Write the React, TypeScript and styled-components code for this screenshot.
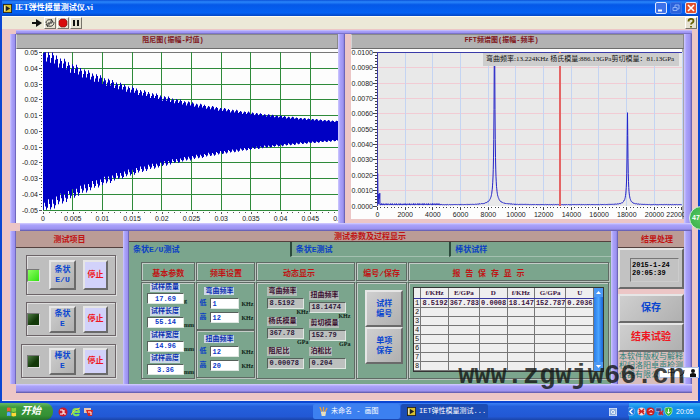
import React from "react";
import styled, { createGlobalStyle, css } from "styled-components";

const Global = createGlobalStyle`
  * { box-sizing: border-box; }
  body { margin: 0; background: #ecc6c6; }
  body, button, input, table {
    font-family: "Liberation Mono", "Noto Sans CJK SC", monospace;
    font-size: 7px;
    line-height: 9px;
  }
  button, input { margin: 0; padding: 0; border-radius: 0; }
  h1, h2, h3, p { margin: 0; font-weight: normal; }
`;

const sunken = css`
  border: 1px solid;
  border-color: #55605a #dfe8e2 #dfe8e2 #55605a;
`;
const raised = css`
  border: 2px solid;
  border-color: #e6e6e6 #6a6a6a #6a6a6a #e6e6e6;
`;
const groove = css`
  border: 1px solid #5f6a64;
  box-shadow: inset 1px 1px 0 #c4cdc8, 1px 1px 0 #b9c4be;
`;

const Desktop = styled.div`
  position: relative;
  display: flex;
  flex-direction: column;
  min-height: 100vh;
  overflow: hidden;
`;
const Window = styled.main`
  flex: 1;
  display: flex;
  flex-direction: column;
  border: solid #0a46d2;
  border-width: 0 2px 2px;
`;
const TitleBar = styled.header`
  display: flex;
  align-items: center;
  gap: 3px;
  height: 16px;
  padding: 0 1px;
  color: #fff;
  background: linear-gradient(#0a50d8, #2a86fa 12%, #0558e8 30%, #0462f4 80%, #0346c4);
  h1 {
    flex: 1;
    font-family: "Liberation Serif", "Noto Sans CJK SC", serif;
    font-size: 8px;
    font-weight: bold;
    line-height: 12px;
  }
`;
const CaptionButton = styled.button<{ $close?: boolean; $dim?: boolean }>`
  display: flex;
  width: 12px;
  height: 12px;
  border: 1px solid ${(p) => (p.$dim ? "#3a74e8" : "#dfe8ff")};
  border-radius: 2px;
  background: ${(p) => (p.$close ? "#e2502c" : p.$dim ? "#2a62dc" : "#3c72ea")};
  svg { width: 100%; height: 100%; }
`;
const Toolbar = styled.div`
  display: flex;
  align-items: center;
  height: 13px;
  padding: 0 1px 0 29px;
  background: #ece9d8;
  border-top: 1px solid #fffef2;
`;
const ToolButton = styled.button<{ $flat?: boolean; $end?: boolean }>`
  display: flex;
  width: 12px;
  height: 12px;
  margin: 0 ${(p) => (p.$end ? 0 : 1)}px 0 ${(p) => (p.$end ? "auto" : 0)};
  border: 1px solid;
  border-color: ${(p) => (p.$flat ? "transparent" : "#fff #77746a #77746a #fff")};
  background: ${(p) => (p.$flat ? "transparent" : "#e6e2d2")};
  svg { width: 100%; height: 100%; }
`;
const Workspace = styled.div`
  flex: 1;
  padding: 1px 6px 7px 8px;
  background: #ecc6c6;
  border-bottom: 1px solid #fbeeee;
`;
const Bar = styled.div<{ $h: number; $inset?: number }>`
  height: ${(p) => p.$h}px;
  margin-left: ${(p) => p.$inset ?? 0}px;
  background: linear-gradient(#d6d0ff, #aaa2fa 25%, #9c92f0 75%, #5a54a4);
`;
const Rail = styled.div<{ $w: number }>`
  flex: none;
  width: ${(p) => p.$w}px;
  background: linear-gradient(90deg, #d0caff, #aaa2fa 30%, #9c92f0 75%, #5a54a4);
`;
const Row = styled.div`
  display: flex;
`;
const ChartPanel = styled.section<{ $grow: number; $gap?: number }>`
  position: relative;
  display: flex;
  flex-direction: column;
  flex: ${(p) => p.$grow} 1 0;
  min-width: 0;
  margin-left: ${(p) => p.$gap ?? 0}px;
  svg { display: block; width: 100%; background: #fdfdfd; }
`;
const ChartTitle = styled.h2<{ $trail: number }>`
  height: 15px;
  padding: 1px ${(p) => p.$trail}px 0 0;
  text-align: center;
  color: #80161c;
  font-size: 7px;
  font-weight: bold;
  background: #b2b2b2;
  border: 1px solid;
  border-color: #8a8a8a #8a8a8a #6c6c6c #d4d4d4;
`;
const Readout = styled.p`
  position: absolute;
  top: 19px;
  right: 5px;
  width: 196px;
  padding: 2px 3px;
  font-family: "Liberation Serif", "Noto Sans CJK SC", serif;
  font-size: 7px;
  color: #111;
  white-space: nowrap;
  background: #cdcdcd;
`;

const Panel = styled.section<{ $w?: number; $bg?: string }>`
  display: flex;
  flex-direction: column;
  flex: ${(p) => (p.$w ? `0 0 ${p.$w}px` : "1 1 0")};
  min-width: 0;
  background: ${(p) => p.$bg ?? "#bebebe"};
`;
const PanelTitle = styled.h2<{ $h: number; $lead?: number }>`
  height: ${(p) => p.$h}px;
  padding-left: ${(p) => p.$lead ?? 0}px;
  line-height: ${(p) => p.$h + 1}px;
  text-align: center;
  color: #c01414;
  font-size: 8px;
  font-weight: bold;
  background: #bb9c96;
  border-bottom: 1px solid #54403e;
  overflow: hidden;
`;
const TestGroup = styled.div<{ $left: number; $h: number; $top: number }>`
  display: flex;
  align-items: center;
  height: ${(p) => p.$h}px;
  margin: ${(p) => p.$top}px 7px 0 ${(p) => p.$left}px;
  border: 1px solid #6c6468;
  box-shadow: inset 1px 1px 0 #dedede, 1px 1px 0 #dedede;
`;
const Led = styled.span<{ $on?: boolean; $left: number }>`
  flex: none;
  width: 13px;
  height: 13px;
  margin: 0 9px 0 ${(p) => p.$left}px;
  border: 1px solid;
  border-color: #777 #ddd #ddd #777;
  background: ${(p) =>
    p.$on ? "linear-gradient(135deg, #8cff60, #32e010)" : "linear-gradient(135deg, #4d7a44, #123808 60%)"};
`;
const PushButton = styled.button<{ $w?: number; $h: number; $large?: boolean; $tone?: "stop" | "end" }>`
  ${raised}
  display: block;
  width: ${(p) => (p.$w ? `${p.$w}px` : "100%")};
  height: ${(p) => p.$h}px;
  margin-right: ${(p) => (p.$w && !p.$tone ? 7 : 0)}px;
  color: ${(p) => (p.$tone ? "#f01420" : "#0a46d0")};
  background: ${(p) => (p.$tone === "stop" ? "#d2d2fa" : "linear-gradient(135deg, #cfcfcf, #b0b0b0)")};
  font-size: ${(p) => (p.$large ? 10 : 8)}px;
  font-weight: bold;
  line-height: 10px;
  white-space: pre;
`;

const Tabs = styled.div`
  display: grid;
  grid-template-columns: 161fr 160fr 162fr;
  height: 15px;
`;
const Tab = styled.button<{ $active?: boolean }>`
  border: 0 solid #2c4a3c;
  border-width: ${(p) => (p.$active ? "0" : "0 0 0 2px")};
  border-bottom: 1px solid ${(p) => (p.$active ? "transparent" : "#a4c0b0")};
  padding-left: 4px;
  text-align: left;
  color: #0a40c4;
  background: #7ba58d;
  font-size: 8px;
  font-weight: bold;
  white-space: nowrap;
`;
const Columns = styled.div`
  display: grid;
  grid-template-columns: 55fr 59fr 100fr 51fr 203fr;
  grid-template-rows: 19px auto;
  gap: 1px;
  margin: 5px 2px 0 12px;
`;
const ColumnTitle = styled.h3<{ $trail?: number }>`
  ${groove}
  padding: 5px ${(p) => p.$trail ?? 0}px 0 0;
  text-align: center;
  color: #c01414;
  font-size: 8px;
  font-weight: bold;
  line-height: 11px;
  white-space: pre;
`;
const Cell = styled.div<{ $pad?: string }>`
  ${groove}
  display: flex;
  flex-direction: column;
  height: 97px;
  padding: ${(p) => p.$pad ?? "0"};
`;
const Chip = styled.label<{ $dark?: boolean }>`
  align-self: flex-start;
  justify-self: start;
  padding: 0 1px;
  color: ${(p) => (p.$dark ? "#3a1030" : "#0a30b0")};
  background: ${(p) => (p.$dark ? "#b4bcb8" : "#ccd8e6")};
  font-size: 7px;
  font-weight: bold;
  line-height: 9px;
  white-space: nowrap;
`;
const Param = styled.div`
  display: grid;
  grid-template-columns: 37px 1fr;
  align-content: start;
  align-items: end;
  row-gap: 1px;
  height: 24px;
  ${Chip} { grid-column: 1 / 3; margin-left: 3px; }
`;
const Field = styled.input<{ $center?: boolean }>`
  ${sunken}
  width: 100%;
  min-width: 0;
  height: 11px;
  padding: 0 1px;
  color: #0a38c8;
  background: #fff;
  font-weight: bold;
  text-align: ${(p) => (p.$center ? "center" : "left")};
`;
const Unit = styled.span`
  font-family: "Liberation Serif", serif;
  font-size: 6px;
  font-weight: bold;
  line-height: 6px;
  color: #0c1c14;
`;
const FreqGroup = styled.fieldset`
  ${groove}
  display: flex;
  flex-direction: column;
  gap: 3px;
  height: 48px;
  margin: 0;
  padding: 4px 1px 0 2px;
  min-width: 0;
  > ${Chip} { margin-left: 5px; line-height: 8px; }
`;
const FreqRow = styled.div`
  display: grid;
  grid-template-columns: 9px 29px 1fr;
  column-gap: 2px;
  align-items: center;
  height: 11px;
  label { color: #0a40c4; font-weight: bold; }
`;
const Dynamic = styled.div`
  display: grid;
  grid-template-columns: 37px 37px;
  column-gap: 5px;
  padding: 4px 0 0 10px;
`;
const Stack = styled.div<{ $top?: number }>`
  display: flex;
  flex-direction: column;
  padding-top: ${(p) => p.$top ?? 0}px;
`;
const Reading = styled.div<{ $h: number }>`
  display: flex;
  flex-direction: column;
  height: ${(p) => p.$h}px;
  ${Unit} { align-self: flex-end; margin-right: -4px; }
`;
const Value = styled.output`
  ${sunken}
  height: 11px;
  margin-top: 2px;
  padding: 0 1px;
  color: #2c1838;
  background: #bcc0be;
  font-weight: bold;
`;

const TableFrame = styled.div`
  display: flex;
  border: 1px solid #333;
`;
const Report = styled.table`
  flex: 1;
  min-width: 0;
  table-layout: fixed;
  border-collapse: collapse;
  background: #efefef;
  color: #3c1440;
  th, td {
    height: 9px;
    padding: 0;
    border: 1px solid #777;
    border-width: 0 1px 1px 0;
    overflow: hidden;
    font-weight: bold;
    line-height: 8px;
    white-space: nowrap;
    text-align: left;
  }
  td { padding-left: 1px; }
  thead th {
    height: 10px;
    text-align: center;
    font-family: "Liberation Serif", serif;
    border-bottom-color: #3838a0;
  }
  tbody th { text-align: center; font-weight: normal; color: #111; }
`;
const Scroll = styled.div`
  display: flex;
  flex-direction: column;
  justify-content: space-between;
  width: 9px;
  background: linear-gradient(90deg, #2a7ce8, #4aa4ff 50%, #1a66d8);
  button { height: 9px; border: 0; background: #4a98f4; }
  svg { display: block; width: 100%; height: 9px; }
`;
const ClockBox = styled.div`
  ${raised}
  height: 41px;
  padding: 8px 3px 4px 10px;
  background: #c2c2c2;
  time {
    display: block;
    height: 24px;
    padding: 2px 1px;
    border: 1px solid;
    border-color: #777 #ccc #ccc #777;
    font-weight: bold;
    line-height: 8px;
  }
`;
const Actions = styled.div`
  padding-top: 5px;
  background: #ecc6c6;
`;
const License = styled.p`
  padding: 0 1px;
  color: #2a8078;
  font-size: 8px;
  line-height: 9px;
  white-space: nowrap;
  background: #d8bebc;
  height: 32px;
`;

const Watermark = styled.div`
  position: absolute;
  right: 15px;
  bottom: 29px;
  color: rgba(16, 20, 18, 0.8);
  font-size: 27px;
  font-weight: bold;
  line-height: 30px;
`;
const Badge = styled.div`
  position: absolute;
  right: -13px;
  top: 206px;
  width: 24px;
  height: 24px;
  padding-left: 2px;
  border: 1px solid #d8f0dc;
  border-radius: 50%;
  background: radial-gradient(#56c864, #36ac48);
  color: #fff;
  font: bold 7px/22px "Liberation Sans", sans-serif;
`;
const ImeBar = styled.div`
  position: absolute;
  right: 1px;
  bottom: 42px;
  display: flex;
  align-items: center;
  justify-content: space-around;
  width: 40px;
  height: 11px;
  padding-left: 6px;
  background: #fff;
  border: 1px solid #b4c4e4;
  font-size: 8px;
  svg { width: 8px; height: 8px; }
`;

const Taskbar = styled.footer`
  display: flex;
  align-items: stretch;
  height: 17px;
  color: #fff;
  background: linear-gradient(#3a80f4, #2460dc 20%, #2258d4 80%, #1a44a8);
`;
const Start = styled.button`
  display: flex;
  align-items: center;
  gap: 4px;
  width: 53px;
  padding-left: 6px;
  border: 0;
  border-radius: 0 8px 8px 0;
  color: #fff;
  background: linear-gradient(#66b866, #3c9a3c 25%, #349034 75%, #23702a);
  font-size: 10px;
  font-style: italic;
  font-weight: bold;
  svg { width: 11px; height: 11px; }
`;
const Quick = styled.div`
  display: flex;
  align-items: center;
  gap: 3px;
  flex: 1;
  padding-left: 5px;
  svg { width: 10px; height: 10px; }
`;
const Task = styled.button<{ $active?: boolean }>`
  display: flex;
  align-items: center;
  gap: 3px;
  width: 87px;
  margin: 1px 1px 1px 0;
  padding-left: 6px;
  border: 0;
  border-radius: 2px;
  color: #fff;
  background: ${(p) => (p.$active ? "#1c4cb4" : "#3c80f0")};
  white-space: nowrap;
  svg { width: 9px; height: 9px; flex: none; }
`;
const Lang = styled.div`
  display: flex;
  align-items: center;
  justify-content: flex-end;
  width: 140px;
  padding-right: 12px;
  svg { width: 8px; height: 8px; }
`;
const Tray = styled.div`
  display: flex;
  align-items: center;
  width: 71px;
  gap: 1px;
  background: linear-gradient(#3cb0f8, #1490ea 25%, #1290e8 80%, #0e6cc0);
  svg { width: 9px; height: 9px; margin-left: -1px; flex: none; }
  time { margin-left: 2px; font: 7px/9px "Liberation Sans", sans-serif; }
`;

const range = (n: number) => Array.from({ length: n }, (_, i) => i);

const decayPath = () => {
  const x0 = 27, mid = 82, scale = 1575;
  const edge = (x: number, side: number) => {
    const t = ((x - x0) / 29.7) * 0.005;
    const step = (x + (side > 0 ? 0 : 2)) % 4;
    const env = 0.0525 * Math.exp(-t / 0.0236);
    const dip = [0, 0.03, 0.13, 0.07][step];
    const wobble = 0.015 * Math.sin(x * 0.55);
    return mid - side * Math.min(0.05, env * (1 - dip + wobble)) * scale;
  };
  const xs = range(296).map((i) => x0 + i);
  const top = xs.map((x) => `${x} ${edge(x, 1).toFixed(1)}H${x + 1}`);
  const bottom = [...xs].reverse().map((x) => `${x + 1} ${edge(x, -1).toFixed(1)}H${x}`);
  return `M${top.join("L")}L${bottom.join("L")}Z`;
};

const spectrumPath = () => {
  const pts = range(1218).map((i) => {
    const x = 26.5 + i / 4;
    const peak = (c: number, h: number, w: number) => h / (1 + Math.pow(Math.abs(x - c) / w, 1.6));
    const noise = Math.abs(Math.sin(i * 1.3) * Math.cos(i * 0.37)) * (x < 90 ? 1.4 : 0.6);
    const start = x < 27 ? 30 : x < 29 ? 11 * Math.abs(Math.sin(i * 1.9)) : 0;
    const y = 156 - peak(143.5, 190, 0.5) - peak(276.5, 92, 0.5) - noise - start;
    return `${x} ${Math.max(3, y).toFixed(1)}`;
  });
  return `M${pts.join("L")}`;
};

const AxisLabel = styled.text`
  font: 7px "Liberation Sans", sans-serif;
  fill: #222;
`;

function DampingChart() {
  const ys = ["0.05", "0.04", "0.03", "0.02", "0.01", "0.00", "-0.01", "-0.02", "-0.03", "-0.04", "-0.05"];
  const xs = ["0", "0.005", "0.01", "0.015", "0.02", "0.025", "0.03", "0.035", "0.04", "0.045", "0.05"];
  return (
    <svg viewBox="0 0 322 174" height="174" preserveAspectRatio="none">
      <g stroke="#2e8a3a" strokeWidth="1" shapeRendering="crispEdges">
        {ys.map((_, i) => <path key={i} d={`M27 ${3.5 + i * 15.75}H322`} stroke={i === 0 ? "#777" : undefined} />)}
        {xs.map((_, i) => <path key={i} d={`M${27 + i * 29.7} 3V161`} />)}
      </g>
      <path d={decayPath()} fill="#0000c4" />
      <g stroke="#555" strokeWidth="1" shapeRendering="crispEdges">
        {range(51).map((i) => <path key={i} d={`M${i % 5 ? 25 : 23} ${3.5 + i * 3.15}H26`} />)}
        {range(50).map((i) => <path key={i} d={`M${27.5 + i * 5.94} 163V${i % 5 ? 164 : 165}`} />)}
      </g>
      {ys.map((t, i) => <AxisLabel key={t} x="22" y={6 + i * 15.75} textAnchor="end">{t}</AxisLabel>)}
      {xs.map((t, i) => <AxisLabel key={t} x={27 + i * 29.7} y="172" textAnchor="middle">{t}</AxisLabel>)}
    </svg>
  );
}

function SpectrumChart() {
  const ys = range(11).map((i) => ((10 - i) / 1000).toFixed(4));
  return (
    <svg viewBox="0 0 333 170" height="170" preserveAspectRatio="none">
      <rect x="26" y="3" width="305" height="154" fill="#e9e9e9" />
      <rect x="331" y="0" width="2" height="170" fill="#a8a8ac" />
      <g strokeWidth="1" shapeRendering="crispEdges">
        {range(10).map((i) => <path key={i} d={`M27 ${3.5 + i * 15.35}H331`} stroke="#f2cbd4" />)}
        {range(11).map((i) => <path key={i} d={`M${54 + i * 27.7} 3V157`} stroke="#c4d4f2" />)}
        <path d="M26.5 157V3.5H331" fill="none" stroke="#3a3aa8" />
        {range(51).map((i) => <path key={i} d={`M${i % 5 ? 24 : 22} ${3.5 + i * 3.07}H26`} stroke="#444" />)}
        {range(89).map((i) => <path key={i} d={`M${26.5 + i * 3.46} 158V${i % 8 ? 159 : 161}`} stroke="#444" />)}
      </g>
      <path d={spectrumPath()} fill="none" stroke="#2424c8" strokeWidth="1" />
      <rect x="208" y="3" width="2" height="154" fill="#e46464" />
      {ys.map((t, i) => <AxisLabel key={t} x="22" y={6 + i * 15.35} textAnchor="end">{t}</AxisLabel>)}
      {range(12).map((i) => (
        <AxisLabel key={i} x={i === 11 ? 325 : 26.5 + i * 27.7} y="168" textAnchor="middle">{i * 2000}</AxisLabel>
      ))}
    </svg>
  );
}

const LabviewIcon = () => (
  <svg width="9" height="9" viewBox="0 0 10 10">
    <rect width="10" height="10" fill="#222" /><rect x="1" y="1" width="8" height="8" fill="#d8c030" />
    <path d="M3 2v6l5-3z" fill="#222" /><path d="M2 2v6" stroke="#fff" />
  </svg>
);

const groups = [
  { name: "条状", mode: "E/U", on: true, left: 10, h: 40, top: 7 },
  { name: "条状", mode: "E", left: 10, h: 34, top: 7 },
  { name: "棒状", mode: "E", left: 5, h: 34, top: 8 },
];
const params = [
  ["试样质量", "17.69", "g"], ["试样长度", "55.14", "mm"],
  ["试样宽度", "14.96", "mm"], ["试样高度", "3.36", "mm"],
];
const bands = [["弯曲频率", "1", "12"], ["扭曲频率", "12", "20"]];
const readings = [
  [["弯曲频率", "8.5192", "KHz"], ["杨氏模量", "367.78", "GPa"], ["阻尼比", "0.00078", ""]],
  [["扭曲频率", "18.1474", "KHz"], ["剪切模量", "152.79", "GPa"], ["泊松比", "0.204", ""]],
];
const heads = ["f/KHz", "E/GPa", "D", "f/KHz", "G/GPa", "U"];
const widths = ["7%", "15%", "16%", "16%", "15%", "15%", "16%"];
const result = ["8.5192", "367.783", "0.0008", "18.147", "152.787", "0.2036"];

const Col = styled.col<{ $w: string }>`
  width: ${(p) => p.$w};
`;

export default function App() {
  return (
    <Desktop>
      <Global />
      <Window>
        <TitleBar>
          <LabviewIcon />
          <h1>IET弹性模量测试仪.vi</h1>
          <CaptionButton aria-label="最小化"><svg viewBox="0 0 10 10"><path d="M2 7.5h4" stroke="#fff" strokeWidth="2" /></svg></CaptionButton>
          <CaptionButton $dim aria-label="还原"><svg viewBox="0 0 10 10"><path d="M2 4.500h4v3H2zM4 4V2h4v4H6" fill="none" stroke="#8cb0f8" /></svg></CaptionButton>
          <CaptionButton $close aria-label="关闭"><svg viewBox="0 0 10 10"><path d="M2 2l6 6M8 2l-6 6" stroke="#fff" strokeWidth="1.6" /></svg></CaptionButton>
        </TitleBar>
        <Toolbar>
          <ToolButton $flat aria-label="运行"><svg viewBox="0 0 10 10"><path d="M0 4h4V1l6 4-6 4V6H0z" fill="#111" /></svg></ToolButton>
          <ToolButton aria-label="连续运行"><svg viewBox="0 0 10 10"><path d="M1 5c0-4 5-4 6-2M9 4c0 5-5 5-7 3M6 1l2 3H5M3 9L1 6h4M3 5h4" fill="none" stroke="#333" /></svg></ToolButton>
          <ToolButton aria-label="停止运行"><svg viewBox="0 0 10 10"><path d="M3 1h4l2 2v4L7 9H3L1 7V3z" fill="#d80c0c" stroke="#701010" strokeWidth=".6" /></svg></ToolButton>
          <ToolButton aria-label="暂停"><svg viewBox="0 0 10 10"><path d="M3 2v6M7 2v6" stroke="#111" strokeWidth="2" /></svg></ToolButton>
          <ToolButton $end aria-label="帮助"><svg viewBox="0 0 10 10"><path d="M2.500 3.500C2.500 0 7.500 0 7.500 3c0 2-2.500 1.500-2.500 3.500M5 8v1.500" fill="none" stroke="#666000" strokeWidth="1.8" /></svg></ToolButton>
        </Toolbar>
        <Workspace>
          <Bar $h={4} $inset={6} />
          <Row>
            <Rail $w={6} />
            <ChartPanel $grow={322}>
              <ChartTitle $trail={8}>阻尼图(振幅-时值)</ChartTitle>
              <DampingChart />
            </ChartPanel>
            <Rail $w={7} />
            <ChartPanel $grow={333} $gap={6}>
              <ChartTitle $trail={32}>FFT频谱图(振幅-频率)</ChartTitle>
              <SpectrumChart />
              <Readout>弯曲频率:13.224KHz 杨氏模量:886.13GPa剪切模量：81.13GPa</Readout>
            </ChartPanel>
            <Rail $w={8} />
          </Row>
          <Bar $h={8} $inset={10} />
          <Row>
            <Rail $w={6} />
            <Panel $w={107}>
              <PanelTitle $h={17}>测试项目</PanelTitle>
              {groups.map((g, i) => (
                <TestGroup key={i} $left={g.left} $h={g.h} $top={g.top}>
                  <Led $on={g.on} $left={g.left === 10 ? 0 : 5} />
                  <PushButton $w={27} $h={g.on ? 30 : 27}>{g.name + "\n" + g.mode}</PushButton>
                  <PushButton $w={25} $h={g.on ? 30 : 27} $tone="stop">停止</PushButton>
                </TestGroup>
              ))}
            </Panel>
            <Rail $w={6} />
            <Panel $bg="#7ba58d">
              <PanelTitle $h={11}>测试参数及过程显示</PanelTitle>
              <Tabs role="tablist">
                <Tab role="tab" aria-selected $active>条状E/U测试</Tab>
                <Tab role="tab">条状E测试</Tab>
                <Tab role="tab">棒状试样</Tab>
              </Tabs>
              <Columns>
                <ColumnTitle>基本参数</ColumnTitle>
                <ColumnTitle>频率设置</ColumnTitle>
                <ColumnTitle $trail={14}>动态显示</ColumnTitle>
                <ColumnTitle>编号/保存</ColumnTitle>
                <ColumnTitle $trail={40}>报 告 保 存 显 示</ColumnTitle>
                <Cell $pad="0 0 0 5px">
                  {params.map(([name, value, unit], i) => (
                    <Param key={name}>
                      <Chip htmlFor={`param${i}`}>{name}</Chip>
                      <Field id={`param${i}`} defaultValue={value} $center />
                      <Unit>{unit}</Unit>
                    </Param>
                  ))}
                </Cell>
                <div>
                  {bands.map(([name, low, high], i) => (
                    <FreqGroup key={name}>
                      <Chip as="span">{name}</Chip>
                      <FreqRow>
                        <label htmlFor={`low${i}`}>低</label>
                        <Field id={`low${i}`} defaultValue={low} />
                        <Unit>KHz</Unit>
                      </FreqRow>
                      <FreqRow>
                        <label htmlFor={`high${i}`}>高</label>
                        <Field id={`high${i}`} defaultValue={high} />
                        <Unit>KHz</Unit>
                      </FreqRow>
                    </FreqGroup>
                  ))}
                </div>
                <Cell>
                  <Dynamic>
                    {readings.map((column, c) => (
                      <Stack key={c} $top={c * 4}>
                        {column.map(([name, value, unit], i) => (
                          <Reading key={name} $h={c ? 28 : 30}>
                            <Chip $dark htmlFor={`out${c}${i}`}>{name}</Chip>
                            <Value id={`out${c}${i}`}>{value}</Value>
                            <Unit>{unit}</Unit>
                          </Reading>
                        ))}
                      </Stack>
                    ))}
                  </Dynamic>
                </Cell>
                <Cell $pad="7px 3px 0 8px">
                  <PushButton $h={37}>{"试样\n编号"}</PushButton>
                  <PushButton $h={37}>{"单项\n保存"}</PushButton>
                </Cell>
                <Cell $pad="4px 4px 0 4px">
                  <TableFrame>
                    <Report>
                      <colgroup>{widths.map((w, i) => <Col key={i} $w={w} />)}</colgroup>
                      <thead>
                        <tr><th />{heads.map((h, i) => <th key={i} scope="col">{h}</th>)}</tr>
                      </thead>
                      <tbody>
                        {range(8).map((r) => (
                          <tr key={r}>
                            <th scope="row">{r + 1}</th>
                            {result.map((v, c) => <td key={c}>{r === 0 ? v : ""}</td>)}
                          </tr>
                        ))}
                      </tbody>
                    </Report>
                    <Scroll>
                      <button aria-label="向上"><svg viewBox="0 0 9 9"><path d="M2 6h5L4.500 3z" fill="#fff" /></svg></button>
                      <button aria-label="向下"><svg viewBox="0 0 9 9"><path d="M2 3h5L4.500 6z" fill="#fff" /></svg></button>
                    </Scroll>
                  </TableFrame>
                </Cell>
              </Columns>
            </Panel>
            <Rail $w={7} />
            <Panel $w={66}>
              <PanelTitle $h={17} $lead={12}>结果处理</PanelTitle>
              <ClockBox><time>2015-1-24<br />20:05:39</time></ClockBox>
              <Actions>
                <PushButton $h={29} $large>保存</PushButton>
                <PushButton $h={29} $large $tone="end">结束试验</PushButton>
                <License>本软件版权与解释<br />权归洛阳卓声检测<br />仪器有限公司所有</License>
              </Actions>
            </Panel>
            <Rail $w={8} />
          </Row>
          <Bar $h={9} $inset={6} />
        </Workspace>
      </Window>
      <Taskbar>
        <Start>
          <svg viewBox="0 0 12 12"><path d="M1 2q2-1 4 0v4q-2-1-4 0z" fill="#f06030" /><path d="M6 2q2 1 5 0v4q-3 1-5 0z" fill="#80d040" /><path d="M1 7q2-1 4 0v4q-2-1-4 0z" fill="#58a8ff" /><path d="M6 7q2 1 5 0v4q-3 1-5 0z" fill="#ffd838" /></svg>
          开始
        </Start>
        <Quick>
          <svg viewBox="0 0 10 10"><circle cx="5" cy="5" r="4.500" fill="#c81c2c" /><path d="M2 3h3v4H2M6 3v4h2" stroke="#fff" fill="none" /></svg>
          <svg viewBox="0 0 10 10"><path d="M2 5h6C8 1 2 1 2 5s5 4 6 2" stroke="#7ce05c" strokeWidth="2" fill="none" /><path d="M0 8Q2 3 9 1" stroke="#f0d040" fill="none" /></svg>
          <svg viewBox="0 0 10 10"><path d="M0 1h7v5H0z" fill="#e8c8b0" /><path d="M2 3h7L8 9H4z" fill="#d82820" /><path d="M4 5h3v3" stroke="#fff" fill="none" /></svg>
        </Quick>
        <Task>
          <svg viewBox="0 0 10 10"><path d="M2 5h6L7 10H3z" fill="#e8e0c0" /><path d="M3 5L1 0M5 5V0M7 5l2-4" stroke="#e8a040" strokeWidth="1.4" /></svg>
          未命名 - 画图
        </Task>
        <Task $active><LabviewIcon />IET弹性模量测试...</Task>
        <Lang><svg viewBox="0 0 10 10"><rect x=".5" y=".5" width="9" height="9" fill="#8cacdc" stroke="#dce8fc" /><circle cx="5" cy="5" r="2" fill="none" stroke="#fff" /><path d="M6 6l2 2" stroke="#fff" /></svg></Lang>
        <Tray>
          <svg viewBox="0 0 10 10"><circle cx="3" cy="5" r="4.500" fill="#2474dc" stroke="#a0d0ff" strokeWidth=".6" /><path d="M5 2L2 5l3 3" stroke="#fff" strokeWidth="1.500" fill="none" /></svg>
          <svg viewBox="0 0 10 10"><circle cx="5" cy="5" r="4.500" fill="#f4dede" /><path d="M2 2l6 6M8 2L2 8M2 5h6" stroke="#d02020" strokeWidth="1.400" /></svg>
          <svg viewBox="0 0 10 10"><circle cx="5" cy="5" r="4.500" fill="#cc2020" /><path d="M3 4q3-3 5 0M4 7h3" stroke="#fff" fill="none" /></svg>
          <svg viewBox="0 0 10 10"><path d="M1 1h6v4H1zM4 5h5v4H3z" fill="#384890" stroke="#b0c4f0" strokeWidth=".6" /><path d="M5 4l4 5M9 4L5 9" stroke="#d82020" strokeWidth="1.300" /></svg>
          <svg viewBox="0 0 10 10"><path d="M5 0l4 1v4q0 3-4 5-4-2-4-5V1z" fill="#38b838" stroke="#e0ffe0" strokeWidth=".6" /><path d="M5 2v5M3 5l2 2 2-2" stroke="#fff" fill="none" /></svg>
          <time>20:05</time>
        </Tray>
      </Taskbar>
      <ImeBar>
        <span>中</span>
        <svg viewBox="0 0 8 8"><path d="M6 1q1 4-4 6" stroke="#222" fill="none" /></svg>
        <svg viewBox="0 0 8 8"><circle cx="4" cy="2" r="2" fill="#111" /><path d="M1 8V5q3-2 6 0v3z" fill="#111" /></svg>
      </ImeBar>
      <Watermark>www.zgwjw66.cn</Watermark>
      <Badge>47</Badge>
    </Desktop>
  );
}
